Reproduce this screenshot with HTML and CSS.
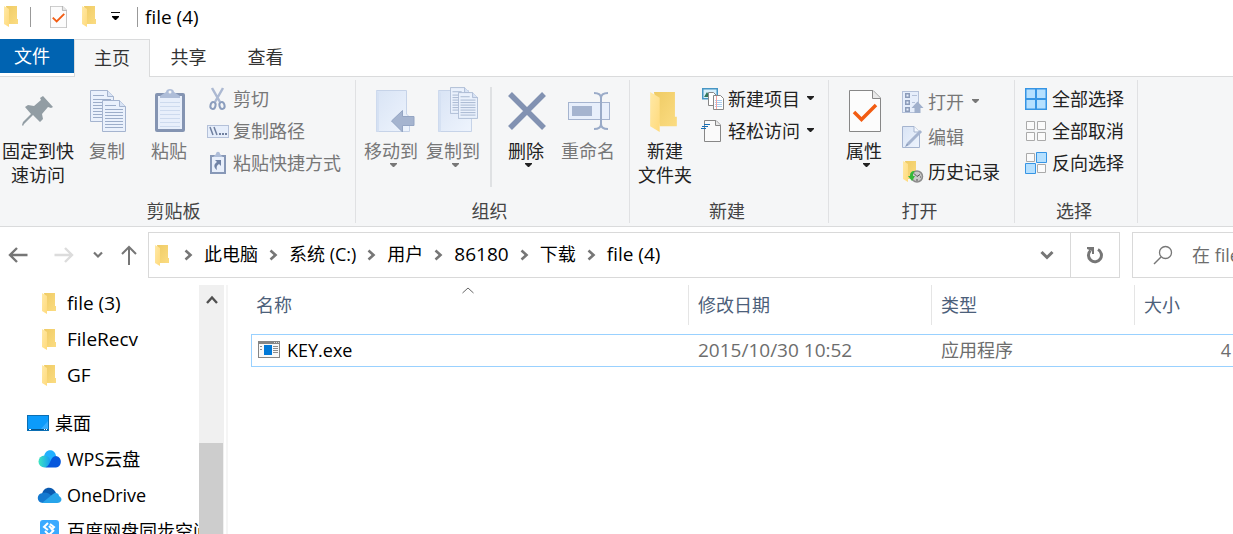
FILE: index.html
```html
<!DOCTYPE html>
<html lang="zh-CN">
<head>
  <meta charset="UTF-8" />
  <meta name="viewport" content="width=device-width, initial-scale=1" />
  <title>file (4)</title>
  <link rel="stylesheet" href="styles.css">
</head>
<body>

  <!-- Shared icons -->
  <svg class="defs" aria-hidden="true">
    <defs>
      <linearGradient id="gFront" x1="0" y1="0" x2="1" y2="1">
        <stop offset="0" stop-color="#ffe9a6" /><stop offset="1" stop-color="#ffda7c" />
      </linearGradient>
      <linearGradient id="gBack" x1="0" y1="0" x2="1" y2="1">
        <stop offset="0" stop-color="#efcb64" /><stop offset="1" stop-color="#fbdc82" />
      </linearGradient>
      <linearGradient id="gPage" x1="0" y1="0" x2="1" y2="1">
        <stop offset="0" stop-color="#d9e4f5" /><stop offset="1" stop-color="#eef4fd" />
      </linearGradient>
      <linearGradient id="gWps" x1="0" y1="0" x2="1" y2="0">
        <stop offset="0" stop-color="#3ee6c0" /><stop offset="1" stop-color="#169cf5" />
      </linearGradient>
    </defs>
    <symbol id="folder" viewBox="0 0 14 21">
      <path d="M2 0H13V13H14V18H5Z" fill="url(#gBack)" />
      <path d="M0 0L5 3V21L0 18Z" fill="url(#gFront)" />
    </symbol>
    <symbol id="doc-check" viewBox="0 0 32 42">
      <path d="M.5.5H24L31.500 8V41.500H.5Z" fill="#fcfcfc" stroke="#878787" />
      <path d="M23.500.5V8.500H31.500" fill="#e8e8e8" stroke="#878787" />
      <path d="M5 22L12.500 29.500L27 15" fill="none" stroke="#f25c12" stroke-width="3.500" />
    </symbol>
    <symbol id="page-lines" viewBox="0 0 24 32">
      <path d="M.5.5H17.500L23.500 6.500V31.500H.5Z" fill="#eaf1fc" stroke="#a5b4cf" />
      <path d="M17.500.5V6.500H23.500" fill="#d9e4f5" stroke="#a5b4cf" />
      <path d="M3 5.500H14M3 9.500H21M3 12.500H21M3 15.500H21M3 18.500H21M3 21.500H21M3 24.500H21M3 27.500H21" stroke="#9cadc9" />
    </symbol>
    <symbol id="chevron" viewBox="0 0 9 12">
      <path d="M1.500 1.500L6.500 6L1.500 10.500" fill="none" stroke="#767676" stroke-width="2.600" />
    </symbol>
    <symbol id="caret" viewBox="0 0 7 4"><path d="M0 0H7V1L4 4H3L0 1Z" fill="currentColor" /></symbol>
  </svg>

  <!-- Title bar -->
  <header class="titlebar">
    <svg class="folder"><use href="#folder" /></svg>
    <span class="bar bar-first"></span>
    <button class="quick" aria-label="属性"><svg width="17" height="22"><use href="#doc-check" /></svg></button>
    <button class="quick" aria-label="新建文件夹"><svg class="folder"><use href="#folder" /></svg></button>
    <button class="quick" aria-label="自定义快速访问工具栏">
      <svg width="9" height="9" viewBox="0 0 9 9"><path d="M0 .5H9" stroke="#111" /><path d="M1 4H8V5L5 8H4L1 5Z" /></svg>
    </button>
    <span class="bar"></span>
    <span class="title">file (4)</span>
  </header>

  <nav class="tabs">
    <button class="tab tab-file">文件</button>
    <button class="tab tab-active">主页</button>
    <button class="tab">共享</button>
    <button class="tab">查看</button>
  </nav>

  <!-- Ribbon -->
  <section class="ribbon">
    <div class="group group-clipboard">
      <div class="group-body">
        <button class="large large-wide">
          <svg viewBox="0 0 46 46">
            <path d="M27 6L37 17L35 18L32 17L26 24L27 29L24 32L17 25L8 34L7 36L6 35L7 32L15 24L9 17L12 15L18 16L25 10L24 8Z" transform="translate(1 2)" fill="#929da4" />
          </svg>
          固定到快<br>速访问
        </button>
        <button class="large" disabled>
          <svg viewBox="0 0 46 46">
            <use href="#page-lines" x="6" y="2" width="24" height="32" />
            <use href="#page-lines" x="18" y="12" width="24" height="32" />
          </svg>
          复制
        </button>
        <button class="large" disabled>
          <svg viewBox="0 0 46 46">
            <rect x="9" y="5" width="30" height="39" rx="2" fill="#8494b2" />
            <rect x="12" y="8" width="24" height="33" fill="#e8effb" />
            <path d="M14 14.500H34M14 18.500H34M14 22.500H34M14 26.500H34M14 30.500H34M14 34.500H34M14 38.500H34" stroke="#cddaee" />
            <path d="M14 10V8L20 4C20 0 28 0 28 4L34 8V10Z" fill="#aebdd8" />
            <circle cx="24" cy="4" r="1.500" fill="#f5f6f7" />
          </svg>
          粘贴
        </button>
        <div class="small-list">
          <button class="small" disabled>
            <svg viewBox="0 0 22 22">
              <path d="M5 0L13 14M16 0L8 14" stroke="#acb9d2" stroke-width="2.500" />
              <ellipse cx="6" cy="17.500" rx="2.500" ry="3.500" fill="none" stroke="#8b9dbd" stroke-width="2" transform="rotate(15 6 17.500)" />
              <ellipse cx="15" cy="17.500" rx="2.500" ry="3.500" fill="none" stroke="#8b9dbd" stroke-width="2" transform="rotate(-15 15 17.500)" />
            </svg>
            剪切
          </button>
          <button class="small" disabled>
            <svg viewBox="0 0 22 22">
              <rect x=".5" y="5.500" width="21" height="12" fill="#e6eefb" stroke="#b4c1d9" />
              <path d="M3 7L6 15M7 7L10 15" stroke="#70809f" stroke-width="1.500" />
              <path d="M12 14H14M15 14H17M18 14H20" stroke="#70809f" stroke-width="2" />
            </svg>
            复制路径
          </button>
          <button class="small" disabled>
            <svg viewBox="0 0 22 22">
              <path d="M3 3H19V22H3Z" fill="#8798b7" /><path d="M5 5H17V20H5Z" fill="#e8effb" />
              <path d="M6 5L9 2C9-1 13-1 13 2L16 5Z" fill="#aebdd8" />
              <path d="M8 8H14V14L12 12C10 13 9 15 10 18C6 15 7 12 10 10Z" fill="#7083a6" />
            </svg>
            粘贴快捷方式
          </button>
        </div>
      </div>
      <div class="group-name">剪贴板</div>
    </div>

    <div class="group group-organize">
      <div class="group-body">
        <button class="large" disabled>
          <svg viewBox="0 0 46 46">
            <path d="M8.500 2.500H38.500V26L41.500 29V43.500H8.500Z" fill="url(#gPage)" stroke="#c6d3e8" />
            <path d="M8.500 2.500L11 5V43.500H8.500Z" fill="#d5e1f3" />
            <path d="M23.500 33L34.500 22.500V28.500H46V37.500H34.500V44Z" fill="#a5b4cf" stroke="#94a5c3" />
          </svg>
          移动到
          <svg class="caret"><use href="#caret" /></svg>
        </button>
        <button class="large" disabled>
          <svg viewBox="0 0 46 46">
            <path d="M8.500 2.500H38.500V28L41.500 31V43.500H8.500Z" fill="url(#gPage)" stroke="#c6d3e8" />
            <path d="M8.500 2.500L11 5V43.500H8.500Z" fill="#d5e1f3" />
            <use href="#page-lines" x="20" y="-1" width="20" height="27" />
            <use href="#page-lines" x="28" y="4" width="20" height="27" />
          </svg>
          复制到
          <svg class="caret"><use href="#caret" /></svg>
        </button>
        <span class="group-split"></span>
        <button class="large">
          <svg viewBox="0 0 46 46"><path d="M7 6L41 40M41 6L7 40" stroke="#8292b2" stroke-width="5.500" /></svg>
          删除
          <svg class="caret"><use href="#caret" /></svg>
        </button>
        <button class="large" disabled>
          <svg viewBox="0 0 46 46">
            <rect x="3.500" y="14.500" width="41" height="17" fill="#e8effb" stroke="#a5b4cf" />
            <rect x="7" y="18" width="20" height="10" fill="#a5b4cf" />
            <path d="M29 5C34 5 36 7 36 10V36C36 39 34 41 29 41M43 5C38 5 36 7 36 10M36 36C36 39 38 41 43 41" fill="none" stroke="#9aabc8" stroke-width="2" />
          </svg>
          重命名
        </button>
      </div>
      <div class="group-name">组织</div>
    </div>

    <div class="group">
      <div class="group-body">
        <button class="large">
          <svg viewBox="0 0 46 46"><use href="#folder" x="8" y="4" width="27" height="40" /></svg>
          新建<br>文件夹
        </button>
        <div class="small-list">
          <button class="small">
            <svg viewBox="0 0 22 22">
              <rect x=".75" y=".75" width="14.500" height="10" fill="#d9f0fc" stroke="#4796c4" stroke-width="1.500" />
              <path d="M2 9L5 4L8 9Z" fill="#32765a" />
              <path d="M6.500 4.500H11.500L14.500 7.500V17.500H6.500Z" fill="#fff" stroke="#878787" />
              <path d="M11.500 7.500H18.500L21.500 10.500V21.500H11.500Z" fill="#fff" stroke="#878787" />
              <path d="M13 12.500H20M13 14.500H20M13 16.500H20M13 18.500H20" stroke="#a9cef0" />
              <path d="M14.500 8V21" stroke="#f5a3a0" />
            </svg>
            新建项目
            <svg class="caret"><use href="#caret" /></svg>
          </button>
          <button class="small">
            <svg viewBox="0 0 22 22">
              <path d="M2.500.5H14L18.500 5V21.500H2.500Z" fill="#fafafa" stroke="#878787" />
              <path d="M13.500.5V5.500H18.500" fill="#e8e8e8" stroke="#878787" />
              <path d="M2 4.500H8M0 6.500H6M-1 8.500H4" stroke="#1870b8" />
            </svg>
            轻松访问
            <svg class="caret"><use href="#caret" /></svg>
          </button>
        </div>
      </div>
      <div class="group-name">新建</div>
    </div>

    <div class="group">
      <div class="group-body">
        <button class="large">
          <svg viewBox="0 0 46 46"><use href="#doc-check" x="8" y="2" width="32" height="42" /></svg>
          属性
          <svg class="caret"><use href="#caret" /></svg>
        </button>
        <div class="small-list small-list-loose">
          <button class="small" disabled>
            <svg viewBox="0 0 22 22">
              <rect x="1.500" y=".5" width="16" height="21" fill="#e6eefb" stroke="#b4c1d9" />
              <path d="M4 2H9V7H4ZM4 9H9V14H4ZM4 16H9V21H4Z" fill="#8c9cba" />
              <path d="M5.500 3.500H7.500V5.500H5.500ZM5.500 10.500H7.500V12.500H5.500ZM5.500 17.500H7.500V19.500H5.500Z" fill="#e6eefb" />
              <path d="M11 4.500H16M11 11.500H14" stroke="#b4c1d9" />
              <path d="M16.500 10.500L22.500 17H19.500V22H13.500V17H10.500Z" fill="#a0b0cc" />
            </svg>
            打开
            <svg class="caret"><use href="#caret" /></svg>
          </button>
          <button class="small" disabled>
            <svg viewBox="0 0 22 22">
              <path d="M1.500.5H13L18.500 6V21.500H1.500Z" fill="url(#gPage)" stroke="#a5b4cf" />
              <path d="M13 .5V6H18.500" fill="#f6f9fe" stroke="#a5b4cf" />
              <path d="M7 18L20 5" stroke="#a5b4cf" stroke-width="3" />
              <path d="M4 21L6 17L8 19Z" fill="#8b9dbd" />
            </svg>
            编辑
          </button>
          <button class="small">
            <svg viewBox="0 0 22 22">
              <use href="#folder" x="2" y="0" width="14" height="21" />
              <circle cx="16" cy="15.500" r="5.500" fill="#c9c9c9" stroke="#8b8b8b" stroke-width="1.500" />
              <path d="M13 12.500L16 15.500L19 13.500M16 18V20M12 16H13M19 16H20" fill="none" stroke="#555" />
              <path d="M14 10C10 10 9 12 9 15H7L11 20L14 15H12C12 13 12 12 14 10Z" fill="#35b83a" />
            </svg>
            历史记录
          </button>
        </div>
      </div>
      <div class="group-name">打开</div>
    </div>

    <div class="group group-select">
      <div class="group-body">
        <div class="small-list">
          <button class="small">
            <svg viewBox="0 0 22 22">
              <rect width="22" height="22" fill="#3695e4" />
              <path d="M1.500 1.500H10V10H1.500ZM12 1.500H20.500V10H12ZM1.500 12H10V20.500H1.500ZM12 12H20.500V20.500H12Z" fill="#b5e0ff" />
            </svg>
            全部选择
          </button>
          <button class="small">
            <svg viewBox="0 0 22 22"><path d="M1.500 1.500H9.500V9.500H1.500ZM12.500 1.500H20.500V9.500H12.500ZM1.500 12.500H9.500V20.500H1.500ZM12.500 12.500H20.500V20.500H12.500Z" fill="#fbfbfb" stroke="#aaa" /></svg>
            全部取消
          </button>
          <button class="small">
            <svg viewBox="0 0 22 22">
              <path d="M1.500 1.500H9.500V9.500H1.500ZM12.500 12.500H20.500V20.500H12.500Z" fill="#fbfbfb" stroke="#aaa" />
              <path d="M11.500.5H21.500V10.500H11.500ZM.5 11.500H10.500V21.500H.5Z" fill="#b5e0ff" stroke="#3695e4" />
            </svg>
            反向选择
          </button>
        </div>
      </div>
      <div class="group-name">选择</div>
    </div>
  </section>

  <!-- Navigation and address bar -->
  <div class="navbar">
    <div class="history">
      <button aria-label="返回"><svg width="20" height="16" viewBox="0 0 20 16"><path d="M19.500 8H2M9 1L2 8L9 15" fill="none" stroke="#767676" stroke-width="2.400" /></svg></button>
      <button aria-label="前进" disabled><svg width="20" height="16" viewBox="0 0 20 16"><path d="M.5 8H18M11 1L18 8L11 15" fill="none" stroke="#dcdcdc" stroke-width="2.400" /></svg></button>
      <button aria-label="最近浏览的位置"><svg width="10" height="8" viewBox="0 0 10 8"><path d="M1 1.500L5 5.500L9 1.500" fill="none" stroke="#767676" stroke-width="2.200" /></svg></button>
      <button aria-label="上移"><svg width="16" height="20" viewBox="0 0 16 20"><path d="M8 20V2M1 9L8 2L15 9" fill="none" stroke="#767676" stroke-width="2" /></svg></button>
    </div>
    <div class="address">
      <svg class="folder"><use href="#folder" /></svg>
      <svg class="chevron"><use href="#chevron" /></svg><a href="#">此电脑</a>
      <svg class="chevron"><use href="#chevron" /></svg><a href="#">系统 (C:)</a>
      <svg class="chevron"><use href="#chevron" /></svg><a href="#">用户</a>
      <svg class="chevron"><use href="#chevron" /></svg><a href="#" class="latin">86180</a>
      <svg class="chevron"><use href="#chevron" /></svg><a href="#">下载</a>
      <svg class="chevron"><use href="#chevron" /></svg><a href="#" class="latin">file (4)</a>
      <button class="address-drop" aria-label="历史地址"><svg width="14" height="10" viewBox="0 0 14 10"><path d="M1.500 2L7 7.500L12.500 2" fill="none" stroke="#767676" stroke-width="3" /></svg></button>
      <button class="refresh" aria-label="刷新">
        <svg width="18" height="18" viewBox="0 0 18 18">
          <path d="M12 3.500A6.500 6.500 0 1 1 4.500 4.500" fill="none" stroke="#767676" stroke-width="3" />
          <path d="M1 1H8V8H6V5L1 3Z" fill="#767676" />
        </svg>
      </button>
    </div>
    <label class="search">
      <svg width="20" height="20" viewBox="0 0 20 20"><circle cx="12.500" cy="7.500" r="6" fill="none" stroke="#777" stroke-width="1.300" /><path d="M8 12L1 19" stroke="#777" stroke-width="1.500" /></svg>
      <input type="text" placeholder="在 file (4) 中搜索" aria-label="搜索">
    </label>
  </div>

  <div class="explorer">
    <!-- Folder tree -->
    <aside class="tree">
      <a href="#" class="node latin"><svg class="folder"><use href="#folder" /></svg>file (3)</a>
      <a href="#" class="node latin"><svg class="folder"><use href="#folder" /></svg>FileRecv</a>
      <a href="#" class="node latin"><svg class="folder"><use href="#folder" /></svg>GF</a>
      <a href="#" class="node node-root">
        <svg viewBox="0 0 24 24">
          <rect x="2.500" y="4.500" width="21" height="15" fill="#0c9bfb" stroke="#0b6fb4" />
          <path d="M15 19L23 10V19Z" fill="#36adff" /><path d="M3 18.500H23" stroke="#07538a" /><path d="M4 18.500H6M19 18.500H20M21 18.500H22" stroke="#fff" />
        </svg>
        桌面
      </a>
      <a href="#" class="node">
        <svg viewBox="0 0 24 24">
          <path d="M7 11C7 1 18 1 19 9L15 17H8Z" fill="#22b0ff" />
          <circle cx="7.500" cy="14.500" r="6" fill="url(#gWps)" />
          <path d="M9 20C14 18 13 9 19 9C26 10 25 20 19 20.500H8Z" fill="#0757dc" />
        </svg>
        WPS云盘
      </a>
      <a href="#" class="node">
        <svg viewBox="0 0 24 24">
          <path d="M5 11C7 3 16 3 19 10L12 15Z" fill="#0a5ab0" />
          <path d="M6 20C-1 20-1 10 6 10C10 8 13 12 18 15L12 20Z" fill="#1479d0" />
          <path d="M5 20L16 11C18 9 22 10 22 13C26 15 25 20 20 20Z" fill="#27a4ea" />
        </svg>
        OneDrive
      </a>
      <a href="#" class="node">
        <svg viewBox="0 0 24 24">
          <rect x="3" y="1" width="19" height="20" rx="3" fill="#3aaaff" />
          <path d="M13 5L17 8L14 11M11 4L7 8L11 11M12 7L15 10M8 12L12 16L17 11" fill="none" stroke="#fff" stroke-width="2" />
        </svg>
        百度网盘同步空间
      </a>
    </aside>
    <div class="scrollbar">
      <button aria-label="向上滚动"><svg width="12" height="10" viewBox="0 0 12 10"><path d="M1 8L6 2.500L11 8" fill="none" stroke="#505050" stroke-width="2.400" /></svg></button>
      <div class="thumb"></div>
    </div>

    <!-- File list -->
    <main class="files">
      <table>
        <colgroup><col class="col-name"><col class="col-date"><col class="col-type"><col></colgroup>
        <thead>
          <tr>
            <th class="sorted"><span>名称</span><svg width="12" height="7" viewBox="0 0 12 7"><path d="M.5 6L6 1L11.500 6" fill="none" stroke="#666" /></svg></th>
            <th><span>修改日期</span></th>
            <th><span>类型</span></th>
            <th><span>大小</span></th>
          </tr>
        </thead>
        <tbody>
          <tr>
            <td class="name">
              <div>
                <svg width="22" height="17" viewBox="0 0 22 17">
                  <rect x=".5" y=".5" width="21" height="16" fill="#f8f8f8" stroke="#858585" />
                  <path d="M0 1.500H22" stroke="#858585" stroke-width="3" /><path d="M16 1.500H17M18 1.500H19M20 1.500H21" stroke="#ddd" />
                  <rect x="6" y="4" width="8" height="10" fill="#0078d7" />
                  <path d="M2 5.500H4M2 8.500H4M15 5.500H20M15 7.500H20M15 9.500H20M15 11.500H20" stroke="#8d8d8d" />
                </svg>
                KEY.exe
              </div>
            </td>
            <td class="latin">2015/10/30 10:52</td>
            <td>应用程序</td>
            <td class="size">4</td>
          </tr>
        </tbody>
      </table>
    </main>
  </div>

</body>
</html>
```
FILE: styles.css
```css
* {
  box-sizing: border-box;
}

body {
  margin: 0;
  height: 100vh;
  display: flex;
  flex-direction: column;
  overflow: hidden;
  background-color: #fff;
  color: #000;
  font-family: "Open Sans", "Noto Sans CJK SC", sans-serif;
  font-size: 18px;
  line-height: 24px;
}

button {
  font: inherit;
  color: #222;
  background: none;
  border: none;
  padding: 0;
  white-space: nowrap;
}

button:disabled {
  color: #777;
}

a {
  color: inherit;
  text-decoration: none;
}

svg {
  display: block;
  flex: none;
  overflow: visible;
}

.defs {
  position: absolute;
  width: 0;
  height: 0;
}

.folder {
  width: 14px;
  height: 21px;
}

.caret {
  width: 7px;
  height: 4px;
}

/* names and dates without Chinese characters */
.latin,
.title {
  font-size: 19px;
}

/* Title bar */
.titlebar {
  display: flex;
  align-items: center;
  height: 39px;
  padding: 0 4px 6px;
}

.bar {
  width: 1px;
  height: 20px;
  margin: 0 7px 0 17px;
  background-color: #999;
}

.bar-first {
  margin: 0 4px 0 12px;
}

.quick {
  margin-left: 15px;
}

/* Tabs */
.tabs {
  display: flex;
  height: 38px;
  border-bottom: 1px solid #dadbdc;
}

.tab {
  min-width: 77px;
  padding-bottom: 2px;
  color: #333;
}

.tab-file {
  min-width: 74px;
  height: 34px;
  padding: 0 10px 0 0;
  background-color: #0063b1;
  color: #fff;
}

.tab-active {
  min-width: 76px;
  height: 38px;
  background-color: #f5f6f7;
  border: 1px solid #dadbdc;
  border-bottom: none;
}

/* Ribbon */
.ribbon {
  display: flex;
  padding: 3px 0;
  background-color: #f5f6f7;
  border-bottom: 1px solid #dadbdc;
}

.group {
  display: flex;
  flex-direction: column;
  flex: none;
  padding-left: 4px;
  border-right: 1px solid #e0e1e3;
}

.group-clipboard {
  padding-left: 0;
}

.group-organize {
  padding-right: 10px;
}

.group-body {
  display: flex;
  align-items: flex-start;
  min-height: 119px;
}

.group-name {
  padding-right: 8px;
  text-align: center;
  color: #444;
}

.group-organize .group-name {
  padding-right: 0;
}

.group-split {
  width: 2px;
  height: 100px;
  margin: 7px 3px 0 6px;
  background-color: #dfe1e3;
}

.large {
  display: flex;
  flex-direction: column;
  align-items: center;
  width: 62px;
  padding-top: 8px;
}

.large-wide {
  width: 76px;
}

.large > svg:first-child {
  width: 46px;
  height: 46px;
  margin-bottom: 5px;
}

.large .caret {
  margin-left: 5px;
}

.small-list {
  display: flex;
  flex-direction: column;
  padding: 3px 14px 0 6px;
}

.group-clipboard .small-list {
  padding-left: 7px;
}

.small-list-loose {
  padding-top: 4px;
}

.small {
  display: flex;
  align-items: center;
  gap: 4px;
  height: 32px;
}

.small .caret {
  margin: 0 0 2px 3px;
}

.small-list-loose .small {
  gap: 5px;
  height: 35px;
}

.group-select .small-list {
  padding-right: 13px;
}

.group-select .small {
  gap: 5px;
}

.small > svg:first-child {
  width: 22px;
  height: 22px;
}

/* Address bar */
.navbar {
  display: flex;
  padding: 5px 0 7px;
}

.history {
  display: flex;
  align-items: center;
  justify-content: space-between;
  width: 148px;
  padding: 0 11px 0 8px;
}

.history button:nth-child(2) {
  margin-left: 8px;
}

.address {
  display: flex;
  flex: 1;
  align-items: center;
  height: 46px;
  padding-left: 6px;
  border: 1px solid #d9d9d9;
}

.address a {
  padding-bottom: 2px;
}

.chevron {
  width: 9px;
  height: 12px;
  margin: 0 11px;
}

.address .folder + .chevron {
  margin-left: 15px;
}

.address-drop {
  margin-left: auto;
  padding: 0 16px;
}

.refresh {
  display: flex;
  align-items: center;
  justify-content: center;
  align-self: stretch;
  width: 49px;
  border-left: 1px solid #d9d9d9;
}

.search {
  display: flex;
  align-items: center;
  gap: 19px;
  width: 101px;
  margin-left: 12px;
  padding-left: 20px;
  border: 1px solid #d9d9d9;
  border-right: none;
}

.search input {
  flex: 1;
  min-width: 0;
  padding: 0;
  border: none;
  outline: none;
  font: inherit;
}

.search input::placeholder {
  color: #6d6d6d;
}

/* Folder tree */
.explorer {
  display: flex;
  flex: 1;
  min-height: 0;
}

.tree {
  width: 199px;
  overflow: hidden;
}

.node {
  display: flex;
  align-items: center;
  gap: 6px;
  height: 36px;
  padding-left: 37px;
  white-space: nowrap;
}

.node svg {
  width: 24px;
  height: 24px;
}

.node .folder {
  height: 21px;
}

.node-root {
  margin-top: 12px;
  padding-left: 25px;
}

.scrollbar {
  display: flex;
  flex-direction: column;
  width: 25px;
  background-color: #f0f0f0;
}

.scrollbar button {
  display: flex;
  align-items: center;
  justify-content: center;
  height: 30px;
}

.thumb {
  flex: 1;
  margin: 128px 1px 0 0;
  background-color: #cdcdcd;
}

/* File list */
.files {
  flex: 1;
  margin-left: 2px;
  padding-left: 23px;
  border-left: 2px solid #f5f5f5;
}

table {
  width: 100%;
  table-layout: fixed;
  border-spacing: 0;
}

.col-name {
  width: 438px;
}

.col-date {
  width: 243px;
}

.col-type {
  width: 203px;
}

th {
  position: relative;
  padding: 0 0 9px;
  font-weight: normal;
  text-align: left;
  color: #4c607a;
}

th span {
  display: block;
  height: 40px;
  padding-left: 9px;
  line-height: 40px;
  border-right: 1px solid #e5e5e5;
}

th:first-child span {
  padding-left: 5px;
}

th:last-child span {
  border-right: none;
}

/* sort mark sits above the column title */
.sorted svg {
  position: absolute;
  top: 2px;
  left: calc(50% - 8px);
}

td {
  height: 33px;
  padding: 0 0 2px 9px;
  color: #6d6d6d;
  border: solid #99d1ff;
  border-width: 1px 0;
}

td.name {
  padding-left: 6px;
  color: #000;
  border-left-width: 1px;
}

.name div {
  display: flex;
  align-items: center;
  gap: 7px;
}

td.size {
  padding-right: 2px;
  text-align: right;
}
```
